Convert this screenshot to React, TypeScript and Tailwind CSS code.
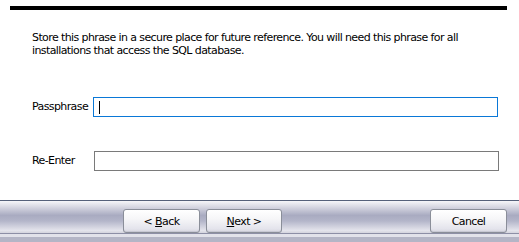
import React from "react";

const font = { fontFamily: '"DejaVu Sans", Tahoma, sans-serif' };

function Btn({ children, w }: { children: React.ReactNode; w: string }) {
  return (
    <button
      className={`${w} h-[24px] rounded-[3px] border border-[#8a8e99] bg-[linear-gradient(to_bottom,#ffffff_0%,#f6f6f8_40%,#e4e4ec_85%,#d6d6e0_100%)] text-[11px] text-black leading-none flex items-center justify-center shadow-[inset_0_-1px_0_#c8c8d4]`}
    >
      {children}
    </button>
  );
}

export default function App() {
  return (
    <div
      className="w-[519px] h-[242px] bg-white flex flex-col overflow-hidden text-black text-[11px] tracking-[-0.6px]"
      style={font}
    >
      <div className="pt-[6px]">
        <div className="ml-[10px] w-[497px] h-[4px] bg-black" />
      </div>
      <div className="mt-[21px] ml-[32px] w-[450px] leading-[13px] text-[11px]">
        Store this phrase in a secure place for future reference. You will need this phrase for all installations that access the SQL database.
      </div>
      <div className="mt-[40px] flex items-center">
        <div className="ml-[32px] w-[61px]">Passphrase</div>
        <div className="w-[405px] h-[20px] border border-[#0a78d7] flex items-center">
          <div className="ml-[5px] w-px h-[13px] bg-black" />
        </div>
      </div>
      <div className="mt-[34px] flex items-center">
        <div className="ml-[32px] w-[62px]">Re-Enter</div>
        <div className="w-[405px] h-[20px] border border-[#7a7a7a]" />
      </div>
      <div className="flex-1" />
      <div className="h-px bg-[#56617a]" />
      <div className="h-[32px] bg-[linear-gradient(to_bottom,#f6f6f9_0%,#e2e2ea_12%,#a9abc1_45%,#b3b5c9_62%,#e4e4ec_92%,#d4d4de_100%)] flex items-start pt-[8px]">
        <div className="ml-[123px]">
          <Btn w="w-[77px]">
            &lt;&nbsp;<span className="underline">B</span>ack
          </Btn>
        </div>
        <div className="ml-[6px]">
          <Btn w="w-[76px]">
            <span className="underline">N</span>ext&nbsp;&gt;
          </Btn>
        </div>
        <div className="ml-auto mr-[12px]">
          <Btn w="w-[77px]">Cancel</Btn>
        </div>
      </div>
      <div className="h-px bg-[#8d8fa6]" />
      <div className="h-[3px] bg-[#e2e2ea]" />
      <div className="h-[5px] bg-[#b4b5c6]" />
    </div>
  );
}
